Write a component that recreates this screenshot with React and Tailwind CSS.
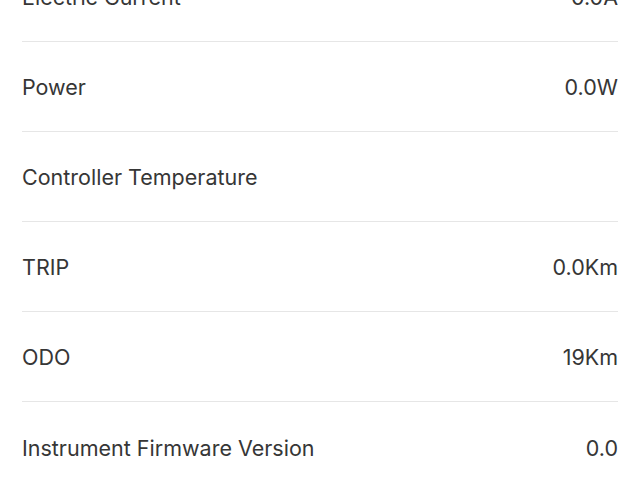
export default function App() {
  const rows = [
    ["Electric Current", "0.0A"],
    ["Power", "0.0W"],
    ["Controller Temperature", ""],
    ["TRIP", "0.0Km"],
    ["ODO", "19Km"],
    ["Instrument Firmware Version", "0.0"],
  ];
  return (
    <div className="w-[640px] h-[480px] overflow-hidden bg-white" style={{ fontFamily: "Inter, 'Noto Sans', sans-serif" }}>
      <div className="mt-[-48px] px-[22px]">
        {rows.map(([k, v], i) => (
          <div
            key={k}
            className={`flex items-center justify-between h-[90px] pt-[2px] text-[21.5px] text-[#363636] ${i < rows.length - 1 ? "border-b border-[#e6e6e6]" : ""}`}
          >
            <span>{k}</span>
            <span>{v}</span>
          </div>
        ))}
      </div>
    </div>
  );
}
